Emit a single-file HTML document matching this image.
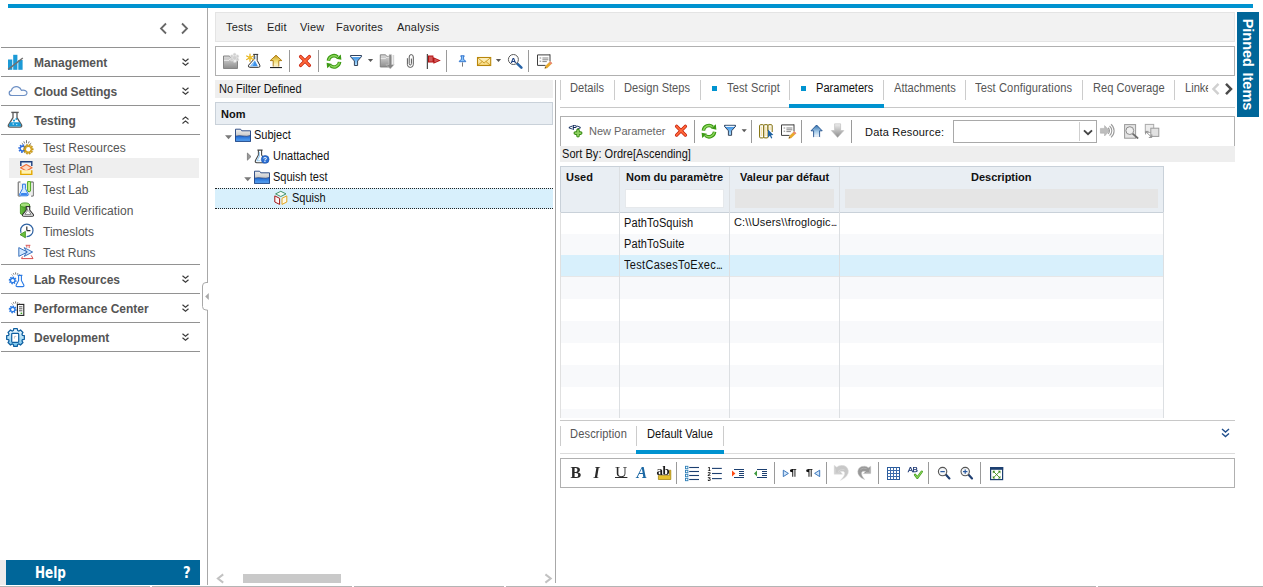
<!DOCTYPE html>
<html lang="en">
<head>
<meta charset="utf-8">
<title>Test Plan</title>
<style>
*{box-sizing:border-box;margin:0;padding:0}
html,body{width:1263px;height:587px;overflow:hidden;background:#fff}
body{position:relative;font-family:"Liberation Sans",sans-serif;font-size:11px;color:#1a1a1a}
.a{position:absolute}
.t{position:absolute;white-space:nowrap;line-height:14px;height:14px}
.hl{position:absolute;height:1px;background:#929292}
.vl{position:absolute;width:1px;background:#a8a8a8}
/* sidebar */
.mod{position:absolute;left:34px;font-weight:bold;font-size:12px;color:#555;line-height:14px;white-space:nowrap}
.sub{position:absolute;left:43px;font-size:12px;color:#555;line-height:14px;white-space:nowrap;}
.chev{position:absolute;left:180px;width:9px;height:10px}
/* tabs */
.tab{position:absolute;top:81px;font-size:12px;color:#555;line-height:14px;white-space:nowrap;transform-origin:0 0;transform:scaleX(.925)}
.tsep{position:absolute;top:80px;width:1px;height:20px;background:#ccc}
.sq{position:absolute;top:86px;width:5px;height:5px;background:#0093d0}
.hd{position:absolute;font-weight:bold;font-size:11px;color:#111;line-height:14px;white-space:nowrap}
.cell{position:absolute;font-size:11px;color:#111;line-height:14px;white-space:nowrap}
.ms{font-size:12px;transform-origin:0 0;transform:scaleX(.917)}
.tsepv{position:absolute;width:1px;background:#b4b4b4}
svg{position:absolute;overflow:visible}
</style>
</head>
<body>
<!-- top blue bar -->
<div class="a" style="left:8px;top:4px;width:1245px;height:4px;background:#0093d0"></div>

<!-- ===== SIDEBAR ===== -->
<div id="sidebar">
<svg style="left:160px;top:23px" width="30" height="12" viewBox="0 0 30 12"><path d="M6 0.5 L1 5.5 L6 10.5" fill="none" stroke="#686868" stroke-width="1.8"/><path d="M22 0.5 L27 5.5 L22 10.5" fill="none" stroke="#686868" stroke-width="1.8"/></svg>
<div class="hl" style="left:1px;top:47px;width:198.5px"></div>
<div class="mod" style="top:56px">Management</div>
<div class="hl" style="left:1px;top:76px;width:198.5px"></div>
<div class="mod" style="top:85px;letter-spacing:-.12px">Cloud Settings</div>
<div class="hl" style="left:1px;top:105px;width:198.5px"></div>
<div class="mod" style="top:114px">Testing</div>
<div class="hl" style="left:1px;top:134px;width:198.5px"></div>
<div class="a" style="left:9px;top:158px;width:190px;height:20px;background:#efefef"></div>
<div class="sub" style="top:141px">Test Resources</div>
<div class="sub" style="top:162px">Test Plan</div>
<div class="sub" style="top:183px">Test Lab</div>
<div class="sub" style="top:204px;letter-spacing:.1px">Build Verification</div>
<div class="sub" style="top:225px">Timeslots</div>
<div class="sub" style="top:246px;letter-spacing:-.1px">Test Runs</div>
<div class="hl" style="left:1px;top:264px;width:198.5px"></div>
<div class="mod" style="top:273px">Lab Resources</div>
<div class="hl" style="left:1px;top:293px;width:198.5px"></div>
<div class="mod" style="top:302px">Performance Center</div>
<div class="hl" style="left:1px;top:322px;width:198.5px"></div>
<div class="mod" style="top:331px">Development</div>
<div class="hl" style="left:1px;top:351px;width:198.5px"></div>
<!-- help -->
<div class="a" style="left:0;top:560px;width:6px;height:25px;background:#ececec"></div>
<div class="a" style="left:6px;top:560px;width:194px;height:25px;background:#006699"></div>
<div class="t" id="help" style="left:34.5px;top:564px;font-family:'DejaVu Sans Condensed','DejaVu Sans',sans-serif;font-weight:bold;font-size:15px;line-height:18px;height:18px;color:#fff;transform-origin:0 50%;transform:scaleX(.89)">Help</div>
<div class="t" id="helpq" style="left:183px;top:564px;font-family:'DejaVu Sans Condensed','DejaVu Sans',sans-serif;font-weight:bold;font-size:15px;line-height:18px;height:18px;color:#fff;transform-origin:0 50%;transform:scaleX(.98)">?</div>
</div>

<!-- sidebar/main separator -->
<div class="vl" style="left:207px;top:8px;height:577px"></div>

<!-- ===== MENU BAR ===== -->
<div class="a" style="left:215px;top:12px;width:1020px;height:30px;background:#f2f2f2;border:1px solid #e4e4e4"></div>
<div class="t" style="left:226px;top:20px;color:#222;letter-spacing:.2px">Tests</div>
<div class="t" style="left:267px;top:20px;color:#222;letter-spacing:.2px">Edit</div>
<div class="t" style="left:300px;top:20px;color:#222;letter-spacing:.2px">View</div>
<div class="t" style="left:336px;top:20px;color:#222;letter-spacing:.2px">Favorites</div>
<div class="t" style="left:397px;top:20px;color:#222;letter-spacing:.2px">Analysis</div>

<!-- ===== MAIN TOOLBAR ===== -->
<div class="a" id="tb1" style="left:215px;top:46px;width:1020px;height:30px;background:#fff;border:1px solid #b0b0b0"></div>

<!-- ===== LEFT TREE PANEL ===== -->
<div class="a" style="left:215px;top:80px;width:338px;height:18px;background:#efefef"></div>
<div class="t ms" style="left:219px;top:82px;color:#111">No Filter Defined</div>
<div class="a" style="left:215px;top:102px;width:338px;height:23px;background:#e9eef3;border:1px solid #c9d1d9"></div>
<div class="hd" style="left:221px;top:107px">Nom</div>
<div class="t ms" style="left:254px;top:128px;color:#111">Subject</div>
<div class="t ms" style="left:273px;top:149px;color:#111">Unattached</div>
<div class="t ms" style="left:273px;top:170px;color:#111">Squish test</div>
<div class="a" style="left:215px;top:188px;width:338px;height:21px;background:#d8f0fc;border-top:1px dotted #222;border-bottom:1px dotted #222"></div>
<div class="t ms" style="left:292px;top:191px;color:#111">Squish</div>
<!-- h scrollbar -->
<svg style="left:217px;top:574px" width="8" height="9" viewBox="0 0 8 9"><path d="M6.2 0.4 L0.9 4.5 L6.2 8.6" fill="none" stroke="#c2c2c2" stroke-width="2"/></svg>
<div class="a" style="left:243px;top:574px;width:98px;height:9px;background:#c9c9c9"></div>
<svg style="left:544px;top:574px" width="8" height="9" viewBox="0 0 8 9"><path d="M1.4 0.4 L6.7 4.5 L1.4 8.6" fill="none" stroke="#c2c2c2" stroke-width="2"/></svg>

<!-- splitter -->
<div class="vl" style="left:555px;top:80px;height:503px"></div>

<!-- ===== RIGHT PANEL TABS ===== -->
<div class="a" style="left:560px;top:107px;width:675px;height:1px;background:#c8c8c8"></div>
<div class="tsep" style="left:560px"></div>
<div class="tab" style="left:570px">Details</div>
<div class="tsep" style="left:614px"></div>
<div class="tab" style="left:624px">Design Steps</div>
<div class="tsep" style="left:700px"></div>
<div class="sq" style="left:712px"></div>
<div class="tab" style="left:726.5px;letter-spacing:.1px">Test Script</div>
<div class="tsep" style="left:789px"></div>
<div class="sq" style="left:801px"></div>
<div class="tab" style="left:816px;color:#111">Parameters</div>
<div class="a" style="left:789px;top:104px;width:95px;height:4px;background:#0093d0"></div>
<div class="tsep" style="left:883px"></div>
<div class="tab" style="left:894px">Attachments</div>
<div class="tsep" style="left:965px"></div>
<div class="tab" style="left:975px;letter-spacing:.12px">Test Configurations</div>
<div class="tsep" style="left:1082px"></div>
<div class="tab" style="left:1093px">Req Coverage</div>
<div class="tsep" style="left:1174px"></div>
<div class="tab" style="left:1185px;width:25px;overflow:hidden">Linked</div>
<svg style="left:1212px;top:83px" width="22" height="12" viewBox="0 0 22 12"><path d="M6.5 0.8 L1.5 6 L6.5 11.2" fill="none" stroke="#d0d0d0" stroke-width="2.5"/><path d="M14 0.8 L19 6 L14 11.2" fill="none" stroke="#4a4a4a" stroke-width="2.5"/></svg>

<!-- ===== PARAM TOOLBAR ===== -->
<div class="a" id="tb2" style="left:560px;top:116px;width:675px;height:31px;background:#fff;border:1px solid #b0b0b0;border-bottom:none"></div>
<div class="t" style="left:589px;top:124px;color:#666">New Parameter</div>
<div class="t" style="left:865px;top:125px;color:#111;letter-spacing:.2px">Data Resource:</div>
<div class="a" style="left:953px;top:120px;width:144px;height:23px;background:#fff;border:1px solid #a9a9a9"></div>
<div class="a" style="left:1079px;top:122px;width:1px;height:19px;background:#cfcfcf"></div>
<svg style="left:1083px;top:129px" width="10" height="7" viewBox="0 0 10 7"><path d="M1 1.4 L5 5.2 L9 1.4" fill="none" stroke="#444" stroke-width="1.9"/></svg>
<div class="a" style="left:560px;top:146px;width:675px;height:16px;background:#eeeeee"></div>
<div class="t ms" style="left:562px;top:147px;color:#111;letter-spacing:.05px">Sort By: Ordre[Ascending]</div>

<!-- ===== GRID ===== -->
<div id="grid">
<div class="a" style="left:560px;top:212px;width:604px;height:206px;background:#fff"></div>
<div class="a" style="left:560px;top:234px;width:604px;height:21px;background:#f8f9fb"></div>
<div class="a" style="left:560px;top:255px;width:604px;height:21px;background:#d8f0fc"></div>
<div class="a" style="left:560px;top:276px;width:604px;height:1px;background:#e6e7e8"></div>
<div class="a" style="left:560px;top:277px;width:604px;height:22px;background:#f8f9fb"></div>
<div class="a" style="left:560px;top:321px;width:604px;height:22px;background:#f8f9fb"></div>
<div class="a" style="left:560px;top:365px;width:604px;height:22px;background:#f8f9fb"></div>
<div class="a" style="left:560px;top:409px;width:604px;height:9px;background:#f8f9fb"></div>
<div class="a" style="left:560px;top:166px;width:604px;height:47px;background:#e9eef3;border:1px solid #c9d1d9"></div>
<div class="a" style="left:560px;top:212px;width:1px;height:206px;background:#e0e0e0"></div>
<div class="a" style="left:619px;top:167px;width:1px;height:251px;background:#dcdfe2"></div>
<div class="a" style="left:729px;top:167px;width:1px;height:251px;background:#dcdfe2"></div>
<div class="a" style="left:839px;top:167px;width:1px;height:251px;background:#dcdfe2"></div>
<div class="a" style="left:1163px;top:212px;width:1px;height:206px;background:#dcdfe2"></div>
<div class="hd" style="left:566px;top:170px">Used</div>
<div class="hd" style="left:626px;top:170px">Nom du paramètre</div>
<div class="hd" style="left:740px;top:170px">Valeur par défaut</div>
<div class="hd" style="left:971px;top:170px">Description</div>
<div class="a" style="left:625px;top:189px;width:99px;height:19px;background:#fff;border:1px solid #e6e9ec"></div>
<div class="a" style="left:735px;top:189px;width:99px;height:18.5px;background:#e5e5e5"></div>
<div class="a" style="left:845px;top:189px;width:313px;height:18.5px;background:#e5e5e5"></div>
<div class="cell ms" style="left:624px;top:216px;letter-spacing:.12px">PathToSquish</div>
<div class="cell" style="left:734px;top:215px;letter-spacing:.16px">C:\\Users\\froglogic<span style="letter-spacing:-1.3px">...</span></div>
<div class="cell ms" style="left:624px;top:237px;letter-spacing:.12px">PathToSuite</div>
<div class="cell ms" style="left:624px;top:258px;letter-spacing:.33px">TestCasesToExec<span style="letter-spacing:-1.3px">...</span></div>
</div>

<!-- ===== BOTTOM TABS ===== -->
<div class="a" style="left:560px;top:420px;width:675px;height:1px;background:#c8c8c8"></div>
<div class="tsep" style="left:560px;top:426px"></div>
<div class="tab" style="left:570px;top:427px;letter-spacing:.14px">Description</div>
<div class="tsep" style="left:636px;top:426px"></div>
<div class="tab" style="left:647px;top:427px;color:#111">Default Value</div>
<div class="tsep" style="left:723px;top:426px"></div>
<div class="a" style="left:560px;top:453px;width:675px;height:1px;background:#dcdcdc"></div>
<div class="a" style="left:636px;top:450px;width:88px;height:4px;background:#0093d0"></div>
<svg style="left:1221px;top:428px" width="9" height="10" viewBox="0 0 9 10"><path d="M1 1 L4.5 4 L8 1 M1 5.5 L4.5 8.5 L8 5.5" fill="none" stroke="#1f4e8c" stroke-width="1.4"/></svg>

<!-- ===== EDITOR TOOLBAR ===== -->
<div class="a" id="tb3" style="left:560px;top:458px;width:675px;height:30px;background:#fff;border:1px solid #b0b0b0"></div>

<svg class="a" id="icons" style="left:0;top:0;will-change:transform" width="1263" height="587" viewBox="0 0 1263 587">
<defs>
<linearGradient id="gGrey" x1="0" y1="0" x2="0" y2="1"><stop offset="0" stop-color="#dcdcdc"/><stop offset="1" stop-color="#8e8e8e"/></linearGradient>
<linearGradient id="gGold" x1="0" y1="0" x2="0" y2="1"><stop offset="0" stop-color="#c89a20"/><stop offset=".5" stop-color="#f2dc70"/><stop offset="1" stop-color="#fffbe0"/></linearGradient>
<linearGradient id="gFun" x1="0" y1="0" x2="0" y2="1"><stop offset="0" stop-color="#2a86e0"/><stop offset="1" stop-color="#b4e2ff"/></linearGradient>
<linearGradient id="gUp" x1="0" y1="0" x2="0" y2="1"><stop offset="0" stop-color="#2f6fae"/><stop offset=".55" stop-color="#a9cdea"/><stop offset="1" stop-color="#ffffff"/></linearGradient>
<linearGradient id="gDn" x1="0" y1="0" x2="0" y2="1"><stop offset="0" stop-color="#eeeeee"/><stop offset="1" stop-color="#8c8c8c"/></linearGradient>
<linearGradient id="gFolT" x1="0" y1="0" x2="0" y2="1"><stop offset="0" stop-color="#f0f0f0"/><stop offset="1" stop-color="#a8a8a8"/></linearGradient>
<linearGradient id="gFolB" x1="0" y1="0" x2="0" y2="1"><stop offset="0" stop-color="#1a63cf"/><stop offset="1" stop-color="#5aa6f4"/></linearGradient>
<linearGradient id="gRed" x1="0" y1="0" x2="0" y2="1"><stop offset="0" stop-color="#ff9a66"/><stop offset="1" stop-color="#f2360c"/></linearGradient>
<linearGradient id="gGrn" x1="0" y1="0" x2="0" y2="1"><stop offset="0" stop-color="#8fd662"/><stop offset="1" stop-color="#3e9c17"/></linearGradient>
<linearGradient id="gEnv" x1="0" y1="0" x2="0" y2="1"><stop offset="0" stop-color="#fff6cf"/><stop offset="1" stop-color="#f7d774"/></linearGradient>
<linearGradient id="gCyl" x1="0" y1="0" x2="1" y2="0"><stop offset="0" stop-color="#6cc043"/><stop offset="1" stop-color="#2f8a14"/></linearGradient>
<linearGradient id="gDev" x1="0" y1="0" x2="0" y2="1"><stop offset="0" stop-color="#f4fbff"/><stop offset=".5" stop-color="#b4e0f6"/><stop offset="1" stop-color="#6cc0ea"/></linearGradient>
</defs>

<g id="ic-side">
<rect x="8" y="59.5" width="4.3" height="10.3" fill="#1c9ad6"/><rect x="13.2" y="54.8" width="4.2" height="15" fill="#1c9ad6"/><rect x="18.3" y="60" width="4.3" height="9.8" fill="#1c9ad6"/>
<path d="M8.2 69.4 L22.8 58" fill="none" stroke="#707070" stroke-width="1.5"/>
<path d="M12 95.5 C8.6 95.6 8.2 91.2 11.4 90.6 C11.8 87.6 15 85.8 18 86.9 C19.8 87.5 21 88.9 21.4 90.3 C24.6 89.4 27.6 91.4 26.9 93.7 C26.5 95 25.4 95.5 24 95.5 Z" fill="#fbfcfe" stroke="#6c8fc4" stroke-width="1.2" stroke-linejoin="round"/>
<path d="M13 112.6 V117.6 L8.5 124.8 Q7.6 127 10 127.1 H20 Q22.4 127 21.5 124.8 L17 117.6 V112.6" fill="#fff" stroke="#5a5a5a" stroke-width="1.3" stroke-linejoin="round"/>
<path d="M10.3 122.2 H19.7 L21 124.8 Q21.6 126.4 20 126.5 H10 Q8.4 126.4 9 124.8 Z" fill="#1c9ad6"/>
<path d="M11.3 112.4 H18.7" stroke="#5a5a5a" stroke-width="1.4"/>
<circle cx="14" cy="120.6" r="1.1" fill="#1c9ad6"/><circle cx="16.3" cy="119" r="0.9" fill="#1c9ad6"/><circle cx="13.2" cy="124" r=".7" fill="#fff"/><circle cx="16.8" cy="124.6" r=".6" fill="#fff"/>
<path d="M25.59 148.33 L27.00 148.62 L26.66 150.30 L25.25 150.01 L24.90 150.52 L25.70 151.72 L24.27 152.67 L23.47 151.47 L22.87 151.59 L22.58 153.00 L20.90 152.66 L21.19 151.25 L20.68 150.90 L19.48 151.70 L18.53 150.27 L19.73 149.47 L19.61 148.87 L18.20 148.58 L18.54 146.90 L19.95 147.19 L20.30 146.68 L19.50 145.48 L20.93 144.53 L21.73 145.73 L22.33 145.61 L22.62 144.20 L24.30 144.54 L24.01 145.95 L24.52 146.30 L25.72 145.50 L26.67 146.93 L25.47 147.73Z" fill="#2f6fe0"/><circle cx="22.6" cy="148.6" r="1.7" fill="#fff"/>
<path d="M31.71 148.49 L33.24 148.52 L33.24 150.08 L31.71 150.11 L31.53 150.65 L32.76 151.57 L31.84 152.84 L30.58 151.95 L30.12 152.29 L30.57 153.76 L29.08 154.24 L28.59 152.79 L28.01 152.79 L27.52 154.24 L26.03 153.76 L26.48 152.29 L26.02 151.95 L24.76 152.84 L23.84 151.57 L25.07 150.65 L24.89 150.11 L23.36 150.08 L23.36 148.52 L24.89 148.49 L25.07 147.95 L23.84 147.03 L24.76 145.76 L26.02 146.65 L26.48 146.31 L26.03 144.84 L27.52 144.36 L28.01 145.81 L28.59 145.81 L29.08 144.36 L30.57 144.84 L30.12 146.31 L30.58 146.65 L31.84 145.76 L32.76 147.03 L31.53 147.95Z" fill="#d6a419" stroke="#a87c08" stroke-width=".4"/><circle cx="28.3" cy="149.3" r="2.2" fill="#fff"/>
<path d="M26.5 143.2 V140.2 M24.6 143.4 L23.8 141.4 M28.4 143.4 L29.2 141.4 M23 144.2 L21.8 143.2 M30 144.2 L31.2 143.2" stroke="#555" stroke-width=".8" fill="none"/>
<path d="M20.8 166 V161.8 H31.8 V166" fill="#e8f1fb" stroke="#1f3f7c" stroke-width="1.4"/>
<path d="M26.3 164.6 L32 167.8 L26.3 171 L20.6 167.8 Z" fill="#ffd9c2" stroke="#f0703a" stroke-width="1.2" stroke-linejoin="round"/>
<path d="M20.8 170.2 V174.4 H31.8 V170.2" fill="#fff3b0" stroke="#e3a700" stroke-width="1.4"/>
<path d="M18.3 182 H20.5 M18.3 182 V196 M18.3 196 H20.5 M33.3 182 H31 M33.3 182 V196 M33.3 196 H31" stroke="#8a8a8a" stroke-width="1.4" fill="none"/>
<rect x="19.5" y="183" width="13" height="12.4" fill="#ededed"/>
<path d="M22.6 184.2 V188.6 L19.6 194.2 Q19.2 195.8 20.8 195.8 H27 Q28.6 195.8 28.2 194.2 L25.4 188.6 V184.2 Z" fill="#d4ebff" stroke="#2a78e4" stroke-width="1" stroke-linejoin="round"/>
<path d="M21.4 193 H26.6 L27.5 194.6 Q27.7 195.2 27 195.2 H21 Q20.3 195.2 20.5 194.6 Z" fill="#3a86ee"/>
<path d="M27.6 181.6 V190 Q27.6 191.8 29.1 191.8 Q30.6 191.8 30.6 190 V181.6 Z" fill="#c9f08a" stroke="#4aa520" stroke-width="1"/>
<path d="M20.4 205 V213 Q20.4 215.2 25 215.2 Q29.6 215.2 29.6 213 V205 Z" fill="url(#gCyl)" stroke="#3a9018" stroke-width=".8"/>
<ellipse cx="25" cy="205" rx="4.6" ry="2.1" fill="#a5e07c" stroke="#3a9018" stroke-width=".8"/>
<path d="M25.6 206.6 H30.4 M26.3 206.8 V210 L22.6 214.6 Q22 216.2 23.8 216.2 H32.2 Q34 216.2 33.4 214.6 L29.7 210 V206.8" fill="#fff" stroke="#333" stroke-width="1.05" stroke-linejoin="round"/>
<path d="M27.6 208.4 V210.6 L24.8 214.4 H31.2 L28.4 210.6" fill="none" stroke="#555" stroke-width=".7" stroke-linejoin="round"/>
<circle cx="26.8" cy="230.4" r="6.2" fill="#fff" stroke="#2f62a2" stroke-width="1.2"/>
<path d="M26.8 226.6 V230.6 H30.4" fill="none" stroke="#333" stroke-width="1.2"/>
<path d="M19.6 234.6 L25.8 231 V238.2 Z" fill="#fff" stroke="#fff" stroke-width="1.6" stroke-linejoin="round"/><path d="M20 234.6 L25.4 231.4 V237.8 Z" fill="#6cc03c" stroke="#3a8a1a" stroke-width=".8" stroke-linejoin="round"/>
<path d="M25.6 245.3 H30.4 M26.8 245.4 V247.6 M29.2 245.4 V248" stroke="#d23a3a" stroke-width=".8" fill="none"/>
<path d="M22.4 256.6 L21.6 258.6 H33 L31.2 255.4" stroke="#d23a3a" stroke-width=".9" fill="none"/>
<path d="M24.2 247.6 L32.6 252 L24.2 256.4 L26.6 252 Z" fill="#cfe6ff" stroke="#2a64b4" stroke-width=".9" stroke-linejoin="round"/>
<path d="M18.8 247.6 L27.4 252 L18.8 256.4 Z" fill="#cfe6ff" stroke="#2a64b4" stroke-width=".9" stroke-linejoin="round"/>
<path d="M15.49 280.15 L16.70 280.41 L16.39 281.94 L15.17 281.72 L14.85 282.19 L15.52 283.24 L14.22 284.10 L13.51 283.08 L12.95 283.19 L12.69 284.40 L11.16 284.09 L11.38 282.87 L10.91 282.55 L9.86 283.22 L9.00 281.92 L10.02 281.21 L9.91 280.65 L8.70 280.39 L9.01 278.86 L10.23 279.08 L10.55 278.61 L9.88 277.56 L11.18 276.70 L11.89 277.72 L12.45 277.61 L12.71 276.40 L14.24 276.71 L14.02 277.93 L14.49 278.25 L15.54 277.58 L16.40 278.88 L15.38 279.59Z" fill="#2a7ae4"/><circle cx="12.7" cy="280.4" r="1.5" fill="#fff"/>
<path d="M15.6 274.4 V272.4 M14 274.7 L13.3 273.2 M17.2 274.7 L17.9 273.2 M12.6 275.5 L11.6 274.6 M18.6 275.5 L19.6 274.6" stroke="#444" stroke-width=".7" fill="none"/>
<path d="M17.6 275.4 H22.4 M18.6 275.6 V280.4 L16.2 285 Q15.6 286.6 17.4 286.6 H22.6 Q24.4 286.6 23.8 285 L21.4 280.4 V275.6" fill="#fff" stroke="#2a7ae4" stroke-width="1.1" stroke-linejoin="round"/>
<path d="M15.49 309.15 L16.70 309.41 L16.39 310.94 L15.17 310.72 L14.85 311.19 L15.52 312.24 L14.22 313.10 L13.51 312.08 L12.95 312.19 L12.69 313.40 L11.16 313.09 L11.38 311.87 L10.91 311.55 L9.86 312.22 L9.00 310.92 L10.02 310.21 L9.91 309.65 L8.70 309.39 L9.01 307.86 L10.23 308.08 L10.55 307.61 L9.88 306.56 L11.18 305.70 L11.89 306.72 L12.45 306.61 L12.71 305.40 L14.24 305.71 L14.02 306.93 L14.49 307.25 L15.54 306.58 L16.40 307.88 L15.38 308.59Z" fill="#2a7ae4"/><circle cx="12.7" cy="309.4" r="1.5" fill="#fff"/>
<path d="M15.6 303.4 V301.4 M14 303.7 L13.3 302.2 M17.2 303.7 L17.9 302.2 M12.6 304.5 L11.6 303.6 M18.6 304.5 L19.6 303.6" stroke="#444" stroke-width=".7" fill="none"/>
<rect x="17.4" y="304.4" width="6.4" height="11" fill="#fff" stroke="#222" stroke-width="1.1"/>
<path d="M19 306.8 H22.4 M19 308.8 H22.4 M19 310.8 H22.4" stroke="#444" stroke-width=".9"/><rect x="20.6" y="312.6" width="1.6" height="1.4" fill="#3aa520"/>
<path d="M22.49 335.41 L24.33 335.74 L24.33 339.26 L22.49 339.59 L21.92 340.97 L22.98 342.50 L20.50 344.98 L18.97 343.92 L17.59 344.49 L17.26 346.33 L13.74 346.33 L13.41 344.49 L12.03 343.92 L10.50 344.98 L8.02 342.50 L9.08 340.97 L8.51 339.59 L6.67 339.26 L6.67 335.74 L8.51 335.41 L9.08 334.03 L8.02 332.50 L10.50 330.02 L12.03 331.08 L13.41 330.51 L13.74 328.67 L17.26 328.67 L17.59 330.51 L18.97 331.08 L20.50 330.02 L22.98 332.50 L21.92 334.03Z" fill="url(#gDev)" stroke="#0f5fa0" stroke-width="1.25" stroke-linejoin="round"/>
<rect x="11.7" y="333.4" width="7" height="9" rx=".8" fill="#fff" stroke="#0f5fa0" stroke-width="1.2"/>
<path d="M14.4 338.6 V336.4 H16.2" fill="none" stroke="#b0b0b0" stroke-width=".7"/>
</g>
<path d="M182.5 58.7 l3 2.6 l3 -2.6 M182.5 62.7 l3 2.6 l3 -2.6" fill="none" stroke="#3a3a3a" stroke-width="1.15"/>
<path d="M182.5 87.7 l3 2.6 l3 -2.6 M182.5 91.7 l3 2.6 l3 -2.6" fill="none" stroke="#3a3a3a" stroke-width="1.15"/>
<path d="M182.5 119.5 l3 -2.6 l3 2.6 M182.5 123.5 l3 -2.6 l3 2.6" fill="none" stroke="#3a3a3a" stroke-width="1.15"/>
<path d="M182.5 275.7 l3 2.6 l3 -2.6 M182.5 279.7 l3 2.6 l3 -2.6" fill="none" stroke="#3a3a3a" stroke-width="1.15"/>
<path d="M182.5 304.7 l3 2.6 l3 -2.6 M182.5 308.7 l3 2.6 l3 -2.6" fill="none" stroke="#3a3a3a" stroke-width="1.15"/>
<path d="M182.5 333.7 l3 2.6 l3 -2.6 M182.5 337.7 l3 2.6 l3 -2.6" fill="none" stroke="#3a3a3a" stroke-width="1.15"/>
<path d="M208 282.5 H206 Q202.5 282.5 202.5 286 V306.5 Q202.5 310 206 310 H208" fill="#fff" stroke="#a8a8a8" stroke-width="1"/><rect x="207" y="283" width="2" height="26.5" fill="#fff"/>
<path d="M205.2 296.5 L208.8 293 V300 Z" fill="#a8a8a8"/><g id="ic-tb1">
<path d="M223.5 68.5 V56 H229.5 L230.6 57.8 H237.5 V68.5 Z" fill="url(#gGrey)" stroke="#858585" stroke-width="1" stroke-linejoin="round"/>
<path d="M224 60.3 H229 L230.6 58.6" fill="none" stroke="#f3f3f3" stroke-width=".9"/>
<g fill="#cfcfcf" stroke="#e9e9e9" stroke-width=".5"><circle cx="234.6" cy="54.6" r="1.5"/><circle cx="231.8" cy="56.2" r="1.5"/><circle cx="237.4" cy="56.2" r="1.5"/><circle cx="231.8" cy="59.4" r="1.5"/><circle cx="237.4" cy="59.4" r="1.5"/><circle cx="234.6" cy="61" r="1.5"/><circle cx="234.6" cy="57.8" r="2.1"/></g>
<circle cx="235" cy="61" r="1.1" fill="#f4f4f4"/>
<path d="M253.2 54.4 H258.2 M254.2 54.6 V59 L248.6 65.2 Q247.6 67.3 250 67.3 H258.6 Q260.6 67.2 259.8 65.2 L257.2 60.4 V54.6" fill="#fff" stroke="#2c2c2c" stroke-width="1" stroke-linejoin="round"/>
<path d="M254.9 60.4 L250.2 66.3 H257.8 Z" fill="#3d92ea"/><path d="M254.9 60.4 L252.8 66.3 H250.2 Z" fill="#86c4ff"/>
<path d="M255.6 56 V59.2" stroke="#9ac8f0" stroke-width=".8"/>
<g stroke="#e6b31c" stroke-width="1.3" stroke-linecap="round"><path d="M250 54.2 V61.3 M246.7 56 L253.3 59.5 M246.7 59.5 L253.3 56"/></g><circle cx="250" cy="57.75" r="1.7" fill="#f0c228"/>
<path d="M276 55.2 L281.8 60.6 H278.8 V66.4 H273.2 V60.6 H270.2 Z" fill="url(#gGold)" stroke="#a87408" stroke-width=".9" stroke-linejoin="round"/>
<path d="M273.4 66.4 H278.6" stroke="#fff9dd" stroke-width="1"/>
<rect x="270" y="67" width="12" height="1.1" fill="#222"/>
<rect x="289" y="50" width="1" height="22" fill="#9a9a9a"/>
<path d="M300.6 56.6 L309.4 65.4 M309.4 56.6 L300.6 65.4" stroke="#c21807" stroke-width="3.3" stroke-linecap="round" fill="none"/>
<path d="M300.6 56.6 L309.4 65.4 M309.4 56.6 L300.6 65.4" stroke="#ff6a3a" stroke-width="1.9" stroke-linecap="round" fill="none"/>
<rect x="318" y="50" width="1" height="22" fill="#9a9a9a"/>
<g transform="translate(334 61.3)"><path d="M-5.6 -0.6 A5.6 5.6 0 0 1 3.6 -4.3" fill="none" stroke="#3c9a14" stroke-width="3.5"/><path d="M5.6 0.6 A5.6 5.6 0 0 1 -3.6 4.3" fill="none" stroke="#3c9a14" stroke-width="3.5"/><path d="M2 -2.6 L7.4 -1.5 L6.8 -6.9 Z" fill="#3c9a14"/><path d="M-2 2.6 L-7.4 1.5 L-6.8 6.9 Z" fill="#3c9a14"/><path d="M-5.5 -1 A5.5 5.5 0 0 1 3.2 -4.5" fill="none" stroke="#8ed65e" stroke-width="1.4"/><path d="M5.5 1 A5.5 5.5 0 0 1 -3.2 4.5" fill="none" stroke="#8ed65e" stroke-width="1.4"/></g>
<path d="M350.5 55.5 h11 v1.1 l-3.9 4.4 v4.5 h-3.2 v-4.5 l-3.9 -4.4 Z" fill="url(#gFun)" stroke="#26324a" stroke-width=".9" stroke-linejoin="round"/>
<path d="M351.4 56.55 h9.2" stroke="#fff" stroke-width="1.1"/>
<path d="M367.9 59 h5.2 l-2.6 3.1 Z" fill="#585858"/>
<path d="M380.3 67 V54.8 H385.6 L386.8 56.4 H391 V67 Z" fill="url(#gGrey)" stroke="#7e7e7e" stroke-width=".9"/>
<path d="M380.8 58.6 H385.4 L386.8 57.2 H390.6" fill="none" stroke="#f4f4f4" stroke-width=".8"/>
<path d="M389 54.4 H391.6 V64.6 H394.4 L390.3 69 L386.2 64.6 H389 Z" fill="#868686" stroke="#d4d4d4" stroke-width=".5"/>
<rect x="392.6" y="55" width="1.6" height="9" fill="#d6d6d6"/>
<path d="M407.4 58.6 V64.6 Q407.4 67.4 410.3 67.4 Q413.3 67.4 413.3 64.6 V57 Q413.3 54.6 411.2 54.6 Q409.2 54.6 409.2 57 V63.6 Q409.2 65 410.3 65 Q411.4 65 411.4 63.6 V59" fill="none" stroke="#505050" stroke-width=".95" stroke-linecap="round"/>
<rect x="426.8" y="54" width="1.1" height="15" fill="#3a3a3a"/>
<path d="M428 55.4 H433.4 V57.2 L440.8 60.4 L433.4 63.8 V62.4 H428 Z" fill="#b31212"/>
<path d="M429 56.5 H432.6 V61.4 H429 Z M434.4 58.4 L438.8 60.4 L434.4 62.6 Z" fill="#d86a6a" opacity=".8"/>
<rect x="446" y="50" width="1" height="22" fill="#9a9a9a"/>
<path d="M460.8 55.7 H464.2 V56.5 H463.5 L463.7 59.8 Q465.8 60.4 465.8 61.7 H459.2 Q459.2 60.4 461.3 59.8 L461.5 56.5 H460.8 Z" fill="#8cc6fa" stroke="#1f66c8" stroke-width=".8" stroke-linejoin="round"/>
<path d="M462.5 62.4 V66.6" stroke="#777" stroke-width="1"/>
<rect x="477.5" y="57.5" width="13.2" height="8" fill="url(#gEnv)" stroke="#b8860b" stroke-width="1.1"/>
<path d="M478 58 L484.1 63 L490.2 58 M478 65.2 L482.4 61.4 M490.2 65.2 L485.8 61.4" fill="none" stroke="#c8961e" stroke-width=".9"/>
<path d="M495.9 59 h5.2 l-2.6 3.1 Z" fill="#585858"/>
<path d="M517 63.4 L521.4 67.6" stroke="#2763a6" stroke-width="2.6" stroke-linecap="round"/>
<circle cx="513.4" cy="59.5" r="5" fill="#fff" stroke="#5a5a5a" stroke-width="1"/>
<text x="513.4" y="62.6" font-family="Liberation Sans,sans-serif" font-weight="bold" font-size="8" text-anchor="middle" fill="#1c3f80">A</text>
<rect x="528" y="50" width="1" height="22" fill="#9a9a9a"/>
<path d="M545.5 65.4 V65.4 H537.5 V54.9 H550" fill="#fff" stroke="#404040" stroke-width="1"/>
<path d="M550 54.4 V61.4" stroke="#404040" stroke-width="1"/>
<path d="M539.6 58 h1.6 M539.6 61.2 h1.6 M542.4 58 h6 M542.4 59.8 h6 M542.4 61.6 h4.4" stroke="#858585" stroke-width="1"/>
<path d="M545.6 66 l4.6 -4.6 l1.8 1.8 l-4.6 4.6 l-2.6 .8 Z" fill="#eaa927" stroke="#c98a10" stroke-width=".4"/>
<path d="M549.2 62.4 l1 -1 l1.8 1.8 l-1 1 Z" fill="#ee7d88"/>
<path d="M544.7 68.3 l.5 -1.5 l1 1 Z" fill="#444"/>
</g>
<g id="ic-tb2">
<text x="568.6" y="130.4" font-family="Liberation Sans,sans-serif" font-weight="bold" font-size="7.2" fill="#0a2558" letter-spacing="-.45">&lt;P&gt;</text>
<path d="M578 130.4 V135.8 M575.3 133.1 H580.7" stroke="#3b8d18" stroke-width="3.6" stroke-linecap="round"/><path d="M578 130.6 V135.6 M575.5 133.1 H580.5" stroke="#8ed060" stroke-width="1.8" stroke-linecap="round"/>
<path d="M676.6 126.3 L685.4 135.1 M685.4 126.3 L676.6 135.1" stroke="#c21807" stroke-width="3.3" stroke-linecap="round" fill="none"/>
<path d="M676.6 126.3 L685.4 135.1 M685.4 126.3 L676.6 135.1" stroke="#ff6a3a" stroke-width="1.9" stroke-linecap="round" fill="none"/>
<rect x="694" y="120" width="1" height="23" fill="#9a9a9a"/>
<g transform="translate(709 131.2)"><path d="M-5.6 -0.6 A5.6 5.6 0 0 1 3.6 -4.3" fill="none" stroke="#3c9a14" stroke-width="3.5"/><path d="M5.6 0.6 A5.6 5.6 0 0 1 -3.6 4.3" fill="none" stroke="#3c9a14" stroke-width="3.5"/><path d="M2 -2.6 L7.4 -1.5 L6.8 -6.9 Z" fill="#3c9a14"/><path d="M-2 2.6 L-7.4 1.5 L-6.8 6.9 Z" fill="#3c9a14"/><path d="M-5.5 -1 A5.5 5.5 0 0 1 3.2 -4.5" fill="none" stroke="#8ed65e" stroke-width="1.4"/><path d="M5.5 1 A5.5 5.5 0 0 1 -3.2 4.5" fill="none" stroke="#8ed65e" stroke-width="1.4"/></g>
<path d="M724.5 125.3 h11 v1.1 l-3.9 4.4 v4.5 h-3.2 v-4.5 l-3.9 -4.4 Z" fill="url(#gFun)" stroke="#26324a" stroke-width=".9" stroke-linejoin="round"/>
<path d="M725.4 126.35 h9.2" stroke="#fff" stroke-width="1.1"/>
<path d="M741.6 129.2 h5.2 l-2.6 3.1 Z" fill="#585858"/>
<rect x="751" y="120" width="1" height="23" fill="#9a9a9a"/>
<g fill="#fff" stroke="#7d6a00" stroke-width="1"><rect x="759.6" y="124.7" width="4.2" height="13.2" rx="1"/><rect x="763.8" y="124.7" width="4.2" height="13.2" rx="1"/><path d="M768 131 V125.7 Q768 124.7 769 124.7 H771.2 Q772.2 124.7 772.2 125.7 V132"/></g>
<path d="M761.7 126.6 V136 M765.9 126.6 V136 M770.1 126.6 V130" stroke="#f2cf66" stroke-width=".7"/>
<path d="M768 129.4 L768 137.6 L769.9 135.8 L771.2 138.6 L772.3 138 L771 135.3 L773.4 135 Z" fill="#1f62a2"/>
<path d="M789.5 135.4 V135.4 H781.5 V124.9 H794" fill="#fff" stroke="#404040" stroke-width="1"/>
<path d="M794 124.4 V131.4" stroke="#404040" stroke-width="1"/>
<path d="M783.6 128 h1.6 M783.6 131.2 h1.6 M786.4 128 h6 M786.4 129.8 h6 M786.4 131.6 h4.4" stroke="#858585" stroke-width="1"/>
<path d="M789.6 136 l4.6 -4.6 l1.8 1.8 l-4.6 4.6 l-2.6 .8 Z" fill="#eaa927" stroke="#c98a10" stroke-width=".4"/>
<path d="M793.2 132.4 l1 -1 l1.8 1.8 l-1 1 Z" fill="#ee7d88"/>
<path d="M788.7 138.3 l.5 -1.5 l1 1 Z" fill="#444"/>
<rect x="801" y="120" width="1" height="23" fill="#9a9a9a"/>
<path d="M816.6 125 L822.2 130.8 H819.6 V137.4 H813.6 V130.8 H811 Z" fill="url(#gUp)" stroke="#1f4f8c" stroke-width=".9" stroke-linejoin="round"/>
<path d="M813.2 137.5 H820" stroke="#fff" stroke-width="1.2"/>
<path d="M834.6 123.8 H840.6 V130.6 H843.8 L837.6 137.4 L831.4 130.6 H834.6 Z" fill="url(#gDn)" stroke="#b8b8b8" stroke-width=".6" stroke-linejoin="round"/>
<rect x="851" y="120" width="1" height="23" fill="#9a9a9a"/>
<path d="M1100.4 128.4 H1104.6 V125.6 L1109.4 130.8 L1104.6 136 V133.2 H1100.4 Z" fill="#bdbdbd" stroke="#a4a4a4" stroke-width=".5"/>
<path d="M1108.07 127.74 A4 4 0 0 1 1108.07 133.86 M1109.55 125.97 A6.3 6.3 0 0 1 1109.55 135.63 M1111.03 124.21 A8.6 8.6 0 0 1 1111.03 137.39" fill="none" stroke="#9c9c9c" stroke-width="1.1"/>
<rect x="1124.6" y="124.6" width="11" height="13.6" fill="#e4e4e4" stroke="#999" stroke-width="1"/>
<path d="M1132.6 133.6 L1137.6 138" stroke="#6e6e6e" stroke-width="1.8" stroke-linecap="round"/><circle cx="1129.8" cy="130.6" r="3.9" fill="#efefef" stroke="#8c8c8c" stroke-width="1"/>
<rect x="1145.3" y="124.4" width="8.4" height="8" fill="#ececec" stroke="#aaa" stroke-width="1"/><rect x="1150.8" y="128.2" width="8" height="8.2" fill="#e2e2e2" stroke="#9c9c9c" stroke-width="1"/>
<path d="M1146 131.8 L1151.4 137 M1145.6 134.4 V131.4 H1148.6 M1148.8 137.4 H1151.8 V134.4" fill="none" stroke="#929292" stroke-width="1"/>
</g>
<g id="ic-tb3">
<text x="570.6" y="477.8" font-family="Liberation Serif,serif" font-weight="bold" font-size="16" fill="#2a2a2a">B</text>
<text x="593.6" y="477.8" font-family="Liberation Serif,serif" font-weight="bold" font-style="italic" font-size="16" fill="#2a2a2a">I</text>
<text x="615" y="476.5" font-family="Liberation Serif,serif" font-size="15" fill="#2a2a2a" textLength="12.2" lengthAdjust="spacingAndGlyphs">U</text><rect x="615" y="477" width="12.4" height="1" fill="#2a2a2a"/>
<text x="636.4" y="477.8" font-family="Liberation Serif,serif" font-weight="bold" font-style="italic" font-size="16" fill="#1b67a3">A</text>
<path d="M658.4 475.4 H669.5 V470.2 H670.8 V479.5 H658.4 Z" fill="#e6c02c" stroke="#9c7c06" stroke-width=".7"/>
<text x="656.5" y="474.9" font-family="Liberation Serif,serif" font-weight="bold" font-size="12.8" fill="#1a1a1a" letter-spacing="-.4">ab</text>
<rect x="676" y="462" width="1" height="22" fill="#9a9a9a"/>
<rect x="685.5" y="466.3" width="2.4" height="2.4" fill="#fff" stroke="#2d7fb8" stroke-width=".9"/><rect x="689.2" y="466.95" width="9.8" height="1.1" fill="#1c3f70"/>
<rect x="685.5" y="470.3" width="2.4" height="2.4" fill="#fff" stroke="#2d7fb8" stroke-width=".9"/><rect x="689.2" y="470.95" width="9.8" height="1.1" fill="#1c3f70"/>
<rect x="685.5" y="474.3" width="2.4" height="2.4" fill="#fff" stroke="#2d7fb8" stroke-width=".9"/><rect x="689.2" y="474.95" width="9.8" height="1.1" fill="#1c3f70"/>
<rect x="685.5" y="478.3" width="2.4" height="2.4" fill="#fff" stroke="#2d7fb8" stroke-width=".9"/><rect x="689.2" y="478.95" width="9.8" height="1.1" fill="#1c3f70"/>
<text x="707.4" y="470.6" font-family="Liberation Sans,sans-serif" font-weight="bold" font-size="6" fill="#000">1</text><rect x="712" y="467.85" width="9.8" height="1.1" fill="#1c3f70"/>
<text x="707.4" y="475.7" font-family="Liberation Sans,sans-serif" font-weight="bold" font-size="6" fill="#000">2</text><rect x="712" y="472.95" width="9.8" height="1.1" fill="#1c3f70"/>
<text x="707.4" y="480.8" font-family="Liberation Sans,sans-serif" font-weight="bold" font-size="6" fill="#000">3</text><rect x="712" y="478.05" width="9.8" height="1.1" fill="#1c3f70"/>
<path d="M732 470.4 L735.4 473.5 L732 476.6 Z" fill="#ff4a12"/>
<path d="M734 469.5 H744 M739 471.5 H744 M739 473.5 H744 M739 475.5 H744 M734 477.5 H744" stroke="#1c3f70" stroke-width="1.1"/>
<path d="M757 470.4 L754 473.5 L757 476.6 Z" fill="#3f9a3f"/>
<path d="M757 469.5 H767 M762 471.5 H767 M762 473.5 H767 M762 475.5 H767 M757 477.5 H767" stroke="#1c3f70" stroke-width="1.1"/>
<rect x="774" y="462" width="1" height="22" fill="#9a9a9a"/>
<path d="M783.3 470.2 L788.4 473.4 L783.3 476.6 Z" fill="#cfe4fa" stroke="#2d6cb4" stroke-width=".9" stroke-linejoin="round"/>
<text x="789.6" y="475.2" font-family="Liberation Sans,sans-serif" font-weight="bold" font-size="9" fill="#111" textLength="7.2" lengthAdjust="spacingAndGlyphs">¶</text>
<text x="805.8" y="475.2" font-family="Liberation Sans,sans-serif" font-weight="bold" font-size="9" fill="#111" textLength="7.2" lengthAdjust="spacingAndGlyphs">¶</text>
<path d="M819.7 470.2 L814.6 473.4 L819.7 476.6 Z" fill="#cfe4fa" stroke="#2d6cb4" stroke-width=".9" stroke-linejoin="round"/>
<rect x="826" y="462" width="1" height="22" fill="#9a9a9a"/>
<path d="M834.2 465.3 L834.2 474.2 L842.6 474.2 L840.2 471.6 Q843.6 470.4 844.6 472.6 Q845.4 475.6 840.4 480.4 Q849 476.4 848.4 470.8 Q847.2 465 840.6 465.4 Q838.4 465.6 836.8 467.2 Z" fill="#c8c8c8" stroke="#dedede" stroke-width=".5"/>
<path d="M835.2 468.6 V473.2 H839.6 L838.4 471 Q841.4 468.6 844.4 469.6" fill="none" stroke="#d8d8d8" stroke-width=".8"/>
<path d="M870.7 466.2 L870.7 473.6 L863.4 473.6 L865.6 471.4 Q862.4 470.6 861.6 472.6 Q861 475.4 864.6 479.6 Q857.4 476.4 857.8 471.2 Q858.6 466 864.8 466.2 Q867 466.4 868.4 467.8 Z" fill="#989898" stroke="#c4c4c4" stroke-width=".5"/>
<path d="M869.6 469.4 V472.6 H866 M860.4 469.4 Q863 467.4 866.6 468.6" fill="none" stroke="#b4b4b4" stroke-width=".8"/>
<rect x="878" y="462" width="1" height="22" fill="#9a9a9a"/>
<rect x="887.5" y="467.5" width="12" height="12" fill="#fff" stroke="#2b5c9c" stroke-width="1"/><path d="M887.5 470.5 H899.5 M887.5 473.5 H899.5 M887.5 476.5 H899.5 M890.5 467.5 V479.5 M893.5 467.5 V479.5 M896.5 467.5 V479.5" stroke="#3d6cab" stroke-width="1"/>
<text x="907.8" y="472.2" font-family="Liberation Sans,sans-serif" font-size="8" fill="#14306e" stroke="#14306e" stroke-width=".25" letter-spacing="-.55">AB</text>
<path d="M915 474.8 L917.3 477.8 L921.8 471.6" fill="none" stroke="#3f9a18" stroke-width="2.3" stroke-linecap="round" stroke-linejoin="round"/><path d="M915.2 475 L917.3 477.6 L921.6 471.8" fill="none" stroke="#8ad65a" stroke-width="1.1" stroke-linecap="round" stroke-linejoin="round"/>
<rect x="928" y="462" width="1" height="22" fill="#9a9a9a"/>
<path d="M946 474.8 L949.4 478.4" stroke="#1f3f72" stroke-width="2.2" stroke-linecap="round"/>
<circle cx="942.6" cy="471.6" r="4.2" fill="#f4f6f8" stroke="#555" stroke-width="1.1"/>
<path d="M940.4 471.6 h4.4" stroke="#2a5aa0" stroke-width="1.2"/>
<path d="M968.6 474.8 L972 478.4" stroke="#1f3f72" stroke-width="2.2" stroke-linecap="round"/>
<circle cx="965.2" cy="471.6" r="4.2" fill="#f4f6f8" stroke="#555" stroke-width="1.1"/>
<path d="M963 471.6 h4.4" stroke="#2a5aa0" stroke-width="1.2"/>
<path d="M965.2 469.4 v4.4" stroke="#2a5aa0" stroke-width="1.2"/>
<rect x="980" y="462" width="1" height="22" fill="#9a9a9a"/>
<rect x="990.6" y="467.6" width="12" height="12" fill="#fff" stroke="#1c3f70" stroke-width="1.2"/><rect x="990" y="467" width="13.2" height="2.8" fill="#1c3f70"/>
<path d="M993.4 471.4 L999.8 477.8 M999.8 471.4 L993.4 477.8" stroke="#3d8c1c" stroke-width=".9"/><path d="M992.8 470.8 h2.6 l-2.6 2.6 Z M1000.4 470.8 h-2.6 l2.6 2.6 Z M992.8 478.4 h2.6 l-2.6 -2.6 Z M1000.4 478.4 h-2.6 l2.6 -2.6 Z" fill="#3d8c1c"/>
</g>
<g id="ic-tree">
<path d="M235.5 141.4 V129.2 H240.6 L241.8 130.8 H250.5 V141.4 Z" fill="url(#gFolT)" stroke="#1f3f7c" stroke-width=".9" stroke-linejoin="round"/>
<path d="M235.5 136.2 Q239 135.2 243 136 T250.5 135.4 V141.4 H235.5 Z" fill="url(#gFolB)" stroke="#1f3f7c" stroke-width=".7"/>
<path d="M225 135.3 H232 L228.5 139.3 Z" fill="#7a7a7a"/>
<path d="M247.4 153 L251 156.6 L247.4 160.2 Z" fill="#9a9a9a" stroke="#6e6e6e" stroke-width=".7" stroke-linejoin="round"/>
<path d="M257.4 150.1 H262.6 M258.4 150.3 V155 L255.4 160.6 Q254.8 162.6 256.8 162.7 H264 Q266 162.6 265.4 160.6 L261.6 155 V150.3" fill="#fff" stroke="#444" stroke-width="1.05" stroke-linejoin="round"/>
<path d="M259.4 152 V156 L257 160.8 H260.4" fill="none" stroke="#9fd0f4" stroke-width="1.1"/>
<circle cx="265.2" cy="159.4" r="3.9" fill="#2c70d4" stroke="#1a4fa8" stroke-width=".6"/><text x="265.2" y="161.9" font-family="Liberation Sans,sans-serif" font-weight="bold" font-size="6.8" text-anchor="middle" fill="#fff">?</text>
<path d="M254.5 183.4 V171.2 H259.6 L260.8 172.8 H269.5 V183.4 Z" fill="url(#gFolT)" stroke="#1f3f7c" stroke-width=".9" stroke-linejoin="round"/>
<path d="M254.5 178.2 Q258 177.2 262 178 T269.5 177.4 V183.4 H254.5 Z" fill="url(#gFolB)" stroke="#1f3f7c" stroke-width=".7"/>
<path d="M244.2 177.3 H251.2 L247.7 181.3 Z" fill="#7a7a7a"/>
<path d="M280.8 191.3 L286 193.9 L280.8 196.5 L275.6 193.9 Z" fill="#f1fbf6" stroke="#3c8c62" stroke-width=".95" stroke-linejoin="round"/>
<path d="M274.8 195.9 L279.6 198.3 V204.4 L274.8 202 Z" fill="#fdf4f4" stroke="#a31414" stroke-width="1" stroke-linejoin="round"/>
<path d="M286.8 195.9 L282 198.3 V204.4 L286.8 202 Z" fill="#fff8e4" stroke="#e2a41e" stroke-width="1" stroke-linejoin="round"/>
</g>
</svg>

<!-- ===== PINNED ITEMS ===== -->
<div class="a" style="left:1237px;top:12px;width:22px;height:105px;background:#006699"></div>
<div class="t" id="pinned" style="left:1259px;top:12px;width:105px;height:22px;line-height:22px;text-align:center;color:#fff;font-weight:bold;font-size:14.5px;word-spacing:1.5px;transform-origin:0 0;transform:rotate(90deg)">Pinned Items</div>

<!-- bottom line -->
<div class="a" style="left:0;top:586px;width:1263px;height:1px;background:#b4b4b4"></div>
<div class="a" style="left:150px;top:586px;width:2px;height:1px;background:#fff"></div>
<div class="a" style="left:352px;top:586px;width:2px;height:1px;background:#fff"></div>
<div class="a" style="left:504px;top:586px;width:2px;height:1px;background:#fff"></div>
<div class="a" style="left:1096px;top:586px;width:2px;height:1px;background:#fff"></div>
</body>
</html>
